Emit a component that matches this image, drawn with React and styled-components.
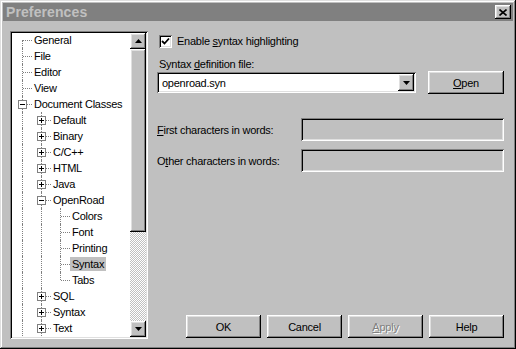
import React from 'react'
import styled, { createGlobalStyle } from 'styled-components'

const GlobalStyle = createGlobalStyle`
  html, body {
    margin: 0;
    padding: 0;
    background: #c0c0c0;
  }
  body {
    font-family: "Liberation Sans", Arial, sans-serif;
    font-size: 11px;
    letter-spacing: -0.25px;
    color: #000;
  }
`

const raised = `
  background: #c0c0c0;
  box-shadow: inset -1px -1px #000, inset 1px 1px #fff, inset -2px -2px #808080, inset 2px 2px #dfdfdf;
`

const sunken = `
  box-shadow: inset 1px 1px #808080, inset -1px -1px #fff, inset 2px 2px #000, inset -2px -2px #dfdfdf;
`

const treeRows = [
  { label: 'General', guides: [], up: false, down: true },
  { label: 'File', guides: [], up: true, down: true },
  { label: 'Editor', guides: [], up: true, down: true },
  { label: 'View', guides: [], up: true, down: true },
  { label: 'Document Classes', guides: [], up: true, down: true, toggle: '-' },
  { label: 'Default', guides: [true], up: true, down: true, toggle: '+' },
  { label: 'Binary', guides: [true], up: true, down: true, toggle: '+' },
  { label: 'C/C++', guides: [true], up: true, down: true, toggle: '+' },
  { label: 'HTML', guides: [true], up: true, down: true, toggle: '+' },
  { label: 'Java', guides: [true], up: true, down: true, toggle: '+' },
  { label: 'OpenRoad', guides: [true], up: true, down: true, toggle: '-' },
  { label: 'Colors', guides: [true, true], up: true, down: true },
  { label: 'Font', guides: [true, true], up: true, down: true },
  { label: 'Printing', guides: [true, true], up: true, down: true },
  { label: 'Syntax', guides: [true, true], up: true, down: true, selected: true },
  { label: 'Tabs', guides: [true, true], up: true, down: false },
  { label: 'SQL', guides: [true], up: true, down: true, toggle: '+' },
  { label: 'Syntax', guides: [true], up: true, down: true, toggle: '+' },
  { label: 'Text', guides: [true], up: true, down: true, toggle: '+' },
]

const Toggle = ({ kind }) => (
  <ToggleBox width="9" height="9" viewBox="0 0 9 9">
    <rect x="0.5" y="0.5" width="8" height="8" fill="#fff" stroke="#808080" />
    <line x1="2" y1="4.5" x2="7" y2="4.5" stroke="#000" />
    {kind === '+' && <line x1="4.5" y1="2" x2="4.5" y2="7" stroke="#000" />}
  </ToggleBox>
)

const Arrow = ({ dir }) => (
  <svg width="7" height="4" viewBox="0 0 7 4">
    {dir === 'up'
      ? <polygon points="3.5,0 7,4 0,4" fill="#000" />
      : <polygon points="0,0 7,0 3.5,4" fill="#000" />}
  </svg>
)

const Underline = styled.span`
  text-decoration: underline;
  text-underline-offset: 1px;
`

export default function App() {
  return (
    <>
      <GlobalStyle />
      <Window>
        <TitleBar>
          <Title>Preferences</Title>
          <CloseButton>
            <svg width="8" height="7" viewBox="0 0 8 7">
              <path d="M0.5 0.5 L7.5 6.5 M7.5 0.5 L0.5 6.5" stroke="#000" strokeWidth="1.6" />
            </svg>
          </CloseButton>
        </TitleBar>

        <Body>
          <TreeBox>
            <TreeList>
              {treeRows.map((row, i) => (
                <TreeRow key={i}>
                  {row.guides.map((g, j) => <Guide key={j} $on={g} />)}
                  <Connector $up={row.up} $down={row.down}>
                    {row.toggle && <Toggle kind={row.toggle} />}
                  </Connector>
                  <TreeLabel $selected={row.selected}>{row.label}</TreeLabel>
                </TreeRow>
              ))}
            </TreeList>
            <ScrollBar>
              <ScrollButton><Arrow dir="up" /></ScrollButton>
              <Thumb />
              <Track />
              <ScrollButton><Arrow dir="down" /></ScrollButton>
            </ScrollBar>
          </TreeBox>

          <Panel>
            <CheckRow>
              <CheckBox>
                <svg width="9" height="9" viewBox="0 0 9 9">
                  <path d="M1 4 L3.5 6.5 L8 1.5" fill="none" stroke="#000" strokeWidth="1.8" />
                </svg>
              </CheckBox>
              <span>Enable <Underline>s</Underline>yntax highlighting</span>
            </CheckRow>

            <FieldLabel>Syntax <Underline>d</Underline>efinition file:</FieldLabel>

            <ComboRow>
              <Combo>
                <ComboText>openroad.syn</ComboText>
                <ComboButton><Arrow dir="down" /></ComboButton>
              </Combo>
              <Button $w={76}><Underline>O</Underline>pen</Button>
            </ComboRow>

            <InputRow $top={24}>
              <span><Underline>F</Underline>irst characters in words:</span>
              <TextField />
            </InputRow>
            <InputRow $top={8}>
              <span>O<Underline>t</Underline>her characters in words:</span>
              <TextField />
            </InputRow>

            <ButtonBar>
              <Button>OK</Button>
              <Button>Cancel</Button>
              <Button $disabled><Underline>A</Underline>pply</Button>
              <Button>Help</Button>
            </ButtonBar>
          </Panel>
        </Body>
      </Window>
    </>
  )
}

const Window = styled.div`
  width: 516px;
  height: 349px;
  box-sizing: border-box;
  padding: 3px;
  display: flex;
  flex-direction: column;
  background: #c0c0c0;
  box-shadow: inset -1px -1px #000, inset 1px 1px #dfdfdf, inset -2px -2px #808080, inset 2px 2px #fff;
`

const TitleBar = styled.div`
  height: 18px;
  background: #808080;
  display: flex;
  align-items: center;
  justify-content: space-between;
  padding: 0 2px 0 3px;
`

const Title = styled.div`
  color: #c0c0c0;
  font-weight: bold;
  font-size: 14px;
  letter-spacing: 0.1px;
`

const CloseButton = styled.div`
  ${raised}
  width: 16px;
  height: 14px;
  display: flex;
  align-items: center;
  justify-content: center;
`

const Body = styled.div`
  flex: 1;
  display: flex;
  padding: 10px 9px 7px 7px;
`

const TreeBox = styled.div`
  ${sunken}
  width: 138px;
  height: 308px;
  box-sizing: border-box;
  padding: 2px;
  display: flex;
  background: #fff;
`

const TreeList = styled.div`
  flex: 1;
  overflow: hidden;
  margin-top: -1px;
`

const TreeRow = styled.div`
  height: 16px;
  display: flex;
  align-items: center;
`

const Guide = styled.div`
  width: 19px;
  height: 16px;
  flex: none;
  position: relative;
  &::before {
    content: '';
    display: ${p => (p.$on ? 'block' : 'none')};
    position: absolute;
    left: 10px;
    top: 0;
    bottom: 0;
    border-left: 1px dotted #808080;
  }
`

const Connector = styled.div`
  width: 19px;
  height: 16px;
  flex: none;
  position: relative;
  &::before {
    content: '';
    position: absolute;
    left: 10px;
    top: ${p => (p.$up ? '0' : '8px')};
    bottom: ${p => (p.$down ? '0' : '8px')};
    border-left: 1px dotted #808080;
  }
  &::after {
    content: '';
    position: absolute;
    left: 11px;
    width: 9px;
    top: 8px;
    border-top: 1px dotted #808080;
  }
`

const ToggleBox = styled.svg`
  position: absolute;
  left: 6px;
  top: 4px;
  z-index: 1;
`

const TreeLabel = styled.div`
  margin-left: 1px;
  padding: 0 2px;
  height: 14px;
  line-height: 14px;
  white-space: nowrap;
  background: ${p => (p.$selected ? '#c0c0c0' : 'transparent')};
`

const ScrollBar = styled.div`
  width: 16px;
  flex: none;
  display: flex;
  flex-direction: column;
`

const ScrollButton = styled.div`
  ${raised}
  width: 16px;
  height: 16px;
  flex: none;
  display: flex;
  align-items: center;
  justify-content: center;
`

const Thumb = styled.div`
  ${raised}
  height: 183px;
  flex: none;
`

const Track = styled.div`
  flex: 1;
  background-image: repeating-conic-gradient(#c0c0c0 0 25%, #fff 0 50%);
  background-size: 2px 2px;
`

const Panel = styled.div`
  margin-left: 9px;
  flex: 1;
  display: flex;
  flex-direction: column;
`

const CheckRow = styled.div`
  margin-top: 2px;
  height: 16px;
  padding-left: 2px;
  display: flex;
  align-items: center;
  gap: 5px;
`

const CheckBox = styled.div`
  ${sunken}
  width: 13px;
  height: 13px;
  background: #fff;
  display: flex;
  align-items: center;
  justify-content: center;
`

const FieldLabel = styled.div`
  margin-top: 9px;
  padding-left: 2px;
  height: 13px;
  line-height: 13px;
`

const ComboRow = styled.div`
  height: 23px;
  display: flex;
  align-items: center;
  justify-content: space-between;
`

const Combo = styled.div`
  ${sunken}
  width: 259px;
  height: 21px;
  box-sizing: border-box;
  padding: 2px;
  background: #fff;
  display: flex;
  align-items: center;
`

const ComboText = styled.div`
  flex: 1;
  padding-left: 3px;
`

const ComboButton = styled.div`
  ${raised}
  width: 16px;
  height: 17px;
  display: flex;
  align-items: center;
  justify-content: center;
`

const InputRow = styled.div`
  margin-top: ${p => p.$top}px;
  height: 23px;
  display: flex;
  align-items: center;
  justify-content: space-between;
`

const TextField = styled.div`
  ${sunken}
  width: 203px;
  height: 23px;
  background: #c0c0c0;
`

const ButtonBar = styled.div`
  margin-top: auto;
  margin-bottom: 1px;
  display: flex;
  justify-content: flex-end;
  gap: 6px;
`

const Button = styled.div`
  ${raised}
  width: ${p => p.$w || 75}px;
  height: 23px;
  display: flex;
  align-items: center;
  justify-content: center;
  color: ${p => (p.$disabled ? '#808080' : '#000')};
  text-shadow: ${p => (p.$disabled ? '1px 1px #fff' : 'none')};
`
